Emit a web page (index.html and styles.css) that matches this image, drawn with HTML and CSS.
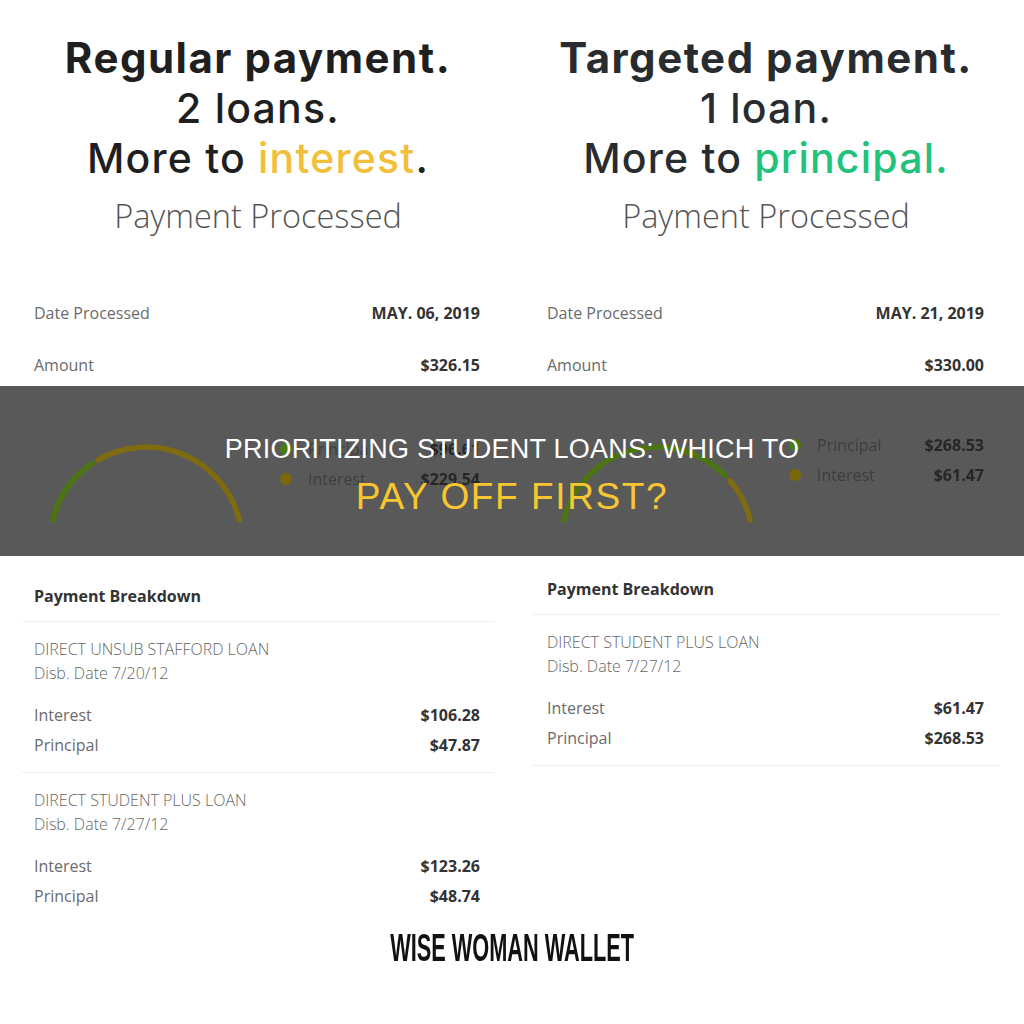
FILE: index.html
```html
<!DOCTYPE html>
<html>
<head>
    <title>Prioritizing Student Loans | Wise Woman Wallet</title>
    <link rel="stylesheet" href="styles.css">
</head>

<body>
    <div class="page">
        <section class="cols top">
            <div class="col">
                <div class="headline">
                    <p class="lead">Regular payment.</p>
                    <p class="sub">2 loans.</p>
                    <p class="sub">More to <span class="interest">interest</span>.</p>
                </div>
                <p class="processed">Payment Processed</p>
                <div class="details">
                    <div class="row"><span class="label">Date Processed</span><span class="value">MAY. 06, 2019</span></div>
                    <div class="row"><span class="label">Amount</span><span class="value">$326.15</span></div>
                </div>
            </div>
            <div class="col right">
                <div class="headline dark">
                    <p class="lead">Targeted payment.</p>
                    <p class="sub">1 loan.</p>
                    <p class="sub">More to <span class="principal">principal.</span></p>
                </div>
                <p class="processed">Payment Processed</p>
                <div class="details">
                    <div class="row"><span class="label">Date Processed</span><span class="value">MAY. 21, 2019</span></div>
                    <div class="row"><span class="label">Amount</span><span class="value">$330.00</span></div>
                </div>
            </div>
        </section>

        <section class="band">
            <div class="cols gauges">
                <div class="gauge-col">
                    <svg class="gauge" width="200" height="90" viewBox="0 0 200 90">
                        <path d="M 6.8 80 A 96 96 0 0 1 46.3 23.4" class="arc-green"/>
                        <path d="M 52 19.9 A 96 96 0 0 1 193.2 80" class="arc-yellow"/>
                    </svg>
                    <div class="legend">
                        <div class="leg-row"><span class="dot green"></span><span class="leg-label">Principal</span><span class="leg-value">$96.61</span></div>
                        <div class="leg-row"><span class="dot yellow"></span><span class="leg-label">Interest</span><span class="leg-value">$229.54</span></div>
                    </div>
                </div>
                <div class="gauge-col right">
                    <svg class="gauge" width="200" height="90" viewBox="0 0 200 90">
                        <path d="M 6.8 80 A 96 96 0 0 1 168.5 35.7" class="arc-green"/>
                        <path d="M 173 40.7 A 96 96 0 0 1 193.2 80" class="arc-yellow"/>
                    </svg>
                    <div class="legend">
                        <div class="leg-row"><span class="dot green"></span><span class="leg-label">Principal</span><span class="leg-value">$268.53</span></div>
                        <div class="leg-row"><span class="dot yellow"></span><span class="leg-label">Interest</span><span class="leg-value">$61.47</span></div>
                    </div>
                </div>
            </div>
            <div class="band-title">
                <p class="t1">PRIORITIZING STUDENT LOANS: WHICH TO</p>
                <p class="t2">PAY OFF FIRST?</p>
            </div>
        </section>

        <section class="cols bottom">
            <div class="col">
                <p class="bd-title">Payment Breakdown</p>
                <div class="loan">
                    <p class="loan-name">DIRECT UNSUB STAFFORD LOAN</p>
                    <p class="loan-name">Disb. Date 7/20/12</p>
                    <div class="loan-rows">
                        <div class="loan-row"><span class="label">Interest</span><span class="value">$106.28</span></div>
                        <div class="loan-row"><span class="label">Principal</span><span class="value">$47.87</span></div>
                    </div>
                </div>
                <div class="loan last">
                    <p class="loan-name">DIRECT STUDENT PLUS LOAN</p>
                    <p class="loan-name">Disb. Date 7/27/12</p>
                    <div class="loan-rows">
                        <div class="loan-row"><span class="label">Interest</span><span class="value">$123.26</span></div>
                        <div class="loan-row"><span class="label">Principal</span><span class="value">$48.74</span></div>
                    </div>
                </div>
            </div>
            <div class="col right">
                <p class="bd-title">Payment Breakdown</p>
                <div class="loan">
                    <p class="loan-name">DIRECT STUDENT PLUS LOAN</p>
                    <p class="loan-name">Disb. Date 7/27/12</p>
                    <div class="loan-rows">
                        <div class="loan-row"><span class="label">Interest</span><span class="value">$61.47</span></div>
                        <div class="loan-row"><span class="label">Principal</span><span class="value">$268.53</span></div>
                    </div>
                </div>
            </div>
        </section>

        <footer class="brand">
            <span class="brand-name">WISE WOMAN WALLET</span>
        </footer>
    </div>
</body>
</html>
```

FILE: styles.css
```css
* {
    margin: 0;
    padding: 0;
    box-sizing: border-box;
}

body {
    background: #fff;
    font-family: "Open Sans", sans-serif;
    color: #333;
}

.page {
    width: 1024px;
    height: 1024px;
    overflow: hidden;
}

.cols {
    display: grid;
    grid-template-columns: 472px 468px;
    column-gap: 38px;
    padding-left: 22px;
}

/* top: headlines + payment details */
.top {
    height: 386px;
}
.headline {
    padding-top: 33px;
    text-align: center;
    font-family: Inter, "DejaVu Sans", sans-serif;
    color: #1f1f1f;
}
.headline.dark {
    color: #292c2e;
}
.headline p {
    line-height: 50px;
}
.lead {
    font-size: 42px;
    font-weight: 700;
    letter-spacing: 1.5px;
}
.sub {
    font-size: 41px;
    font-weight: 500;
    letter-spacing: 1.2px;
}
.interest {
    color: #f2bf3a;
}
.principal {
    color: #20c27c;
}
.processed {
    margin-top: 13px;
    font-size: 32.5px;
    line-height: 40px;
    font-weight: 300;
    color: #555;
    text-align: center;
}
.details {
    margin-top: 65px;
}
.row {
    display: flex;
    justify-content: space-between;
    padding: 0 14px 0 12px;
    font-size: 16px;
    line-height: 24px;
}
.row + .row {
    margin-top: 28px;
}
.right .row,
.right .bd-title,
.right .loan {
    padding-left: 15px;
    padding-right: 16px;
}
.label {
    color: #6b6b6b;
}
.value {
    font-weight: 700;
    color: #333;
}

/* dark title band over the gauges */
.band {
    position: relative;
    height: 170px;
    background: #595959;
    overflow: hidden;
}
.gauges {
    filter: blur(0.7px);
}
.gauge-col {
    display: flex;
    align-items: flex-start;
}
.gauge {
    margin: 54px 0 0 24px;
}
.gauge-col.right .gauge {
    margin-left: 25px;
}
.gauge path {
    fill: none;
    stroke-width: 5.5;
    stroke-linecap: round;
}
.arc-green {
    stroke: #4d7412;
}
.arc-yellow {
    stroke: #7f6c10;
}
.legend {
    margin: 48px 0 0 34px;
    width: 200px;
}
.gauge-col.right .legend {
    margin: 44px 0 0 32px;
    width: 195px;
}
.leg-row {
    display: flex;
    align-items: center;
    font-size: 16px;
    line-height: 30px;
}
.dot {
    width: 12px;
    height: 12px;
    border-radius: 50%;
    margin-right: 16px;
}
.dot.green {
    background: #4b7a10;
}
.dot.yellow {
    background: #7b680c;
}
.leg-label {
    color: #3e3e3e;
    flex: 1;
}
.leg-value {
    color: #262626;
    font-weight: 700;
}
.band-title {
    position: absolute;
    left: 0;
    top: 0;
    width: 100%;
    padding-top: 47px;
    text-align: center;
    font-family: "Liberation Sans", Arial, sans-serif;
}
.t1 {
    font-size: 27px;
    line-height: 32px;
    letter-spacing: 0.25px;
    color: #fff;
}
.t2 {
    margin-top: 10px;
    font-size: 37px;
    line-height: 44px;
    letter-spacing: 1.6px;
    color: #f8c630;
}

/* bottom: payment breakdowns */
.bottom {
    height: 370px;
}
.bottom .col {
    padding-top: 28px;
}
.bottom .col.right {
    padding-top: 21px;
}
.bd-title {
    padding: 0 14px 13px 12px;
    font-size: 16px;
    line-height: 24px;
    font-weight: 700;
    color: #333;
    border-bottom: 1px solid #efefef;
}
.loan {
    padding: 15px 14px 12px 12px;
    border-bottom: 1px solid #efefef;
}
.loan.last {
    border-bottom: none;
}
.loan-name {
    font-size: 16px;
    line-height: 24px;
    font-weight: 300;
    color: #666;
}
.loan-rows {
    margin-top: 15px;
}
.loan-row {
    display: flex;
    justify-content: space-between;
    font-size: 16px;
    line-height: 30px;
}

/* footer logo */
.brand {
    text-align: center;
    line-height: 44px;
}
.brand-name {
    display: inline-block;
    font-family: "Liberation Sans Narrow", "Liberation Sans", sans-serif;
    font-size: 38px;
    font-weight: 700;
    color: #111;
    transform: scaleX(0.572);
}
```
